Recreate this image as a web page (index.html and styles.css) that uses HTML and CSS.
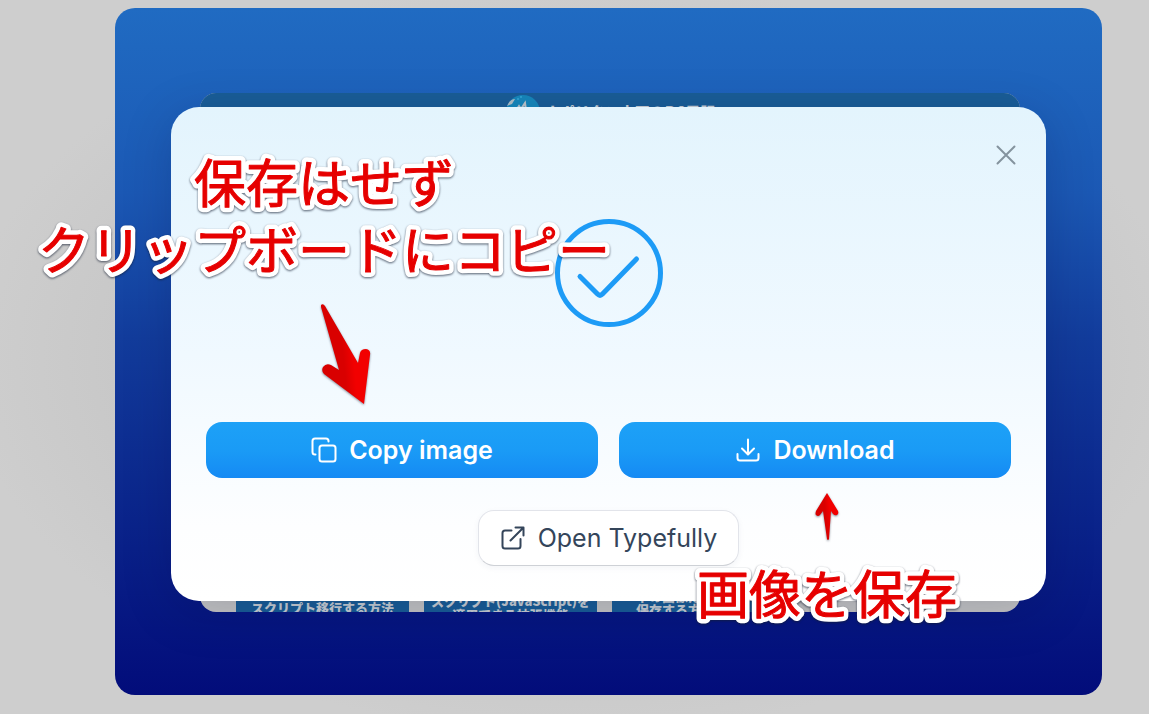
FILE: index.html
```html
<!DOCTYPE html>
<html lang="ja">

<head>
    <meta charset="UTF-8">
    <meta name="viewport" content="width=device-width, initial-scale=1.0">
    <title>Copy image</title>
    <link rel="stylesheet" href="styles.css">
</head>

<body>
    <main class="stage">
        <div class="preview">
            <div class="preview-header">
                <svg class="preview-logo" viewBox="0 0 36 36">
                    <circle cx="18" cy="18" r="17" fill="#1687bb" />
                    <path d="M2 12 Q5 5 10 5 L7 10 Z" fill="#aebdc6" />
                    <path d="M12 15 L14 12 L16 15 L20 9 L21 16" fill="none" stroke="#b9c4cb" stroke-width="2" />
                    <path d="M12 5 h2 M15 3 h2" stroke="#41b8e6" stroke-width="1" />
                </svg>
                <span>ナポリタン寺田のPC日記</span>
            </div>
            <div class="preview-cards">
                <div class="card card-first">スクリプト移行する方法</div>
                <div class="card">スクリプト(JavaScript)を<br>適用できる拡張機能</div>
                <div class="card card-last">下の画像だけを<br>保存する方法</div>
            </div>
        </div>

        <div class="dialog" role="dialog" aria-label="Image ready">
            <button class="close" aria-label="Close">
                <svg viewBox="0 0 20 20" width="20" height="20">
                    <path d="M1.5 1.5 L18.5 18.5 M18.5 1.5 L1.5 18.5" />
                </svg>
            </button>
            <svg class="check" viewBox="1 1 108 108">
                <circle cx="55" cy="55" r="51.5" />
                <path d="M26 58.5 L43.5 76 Q46 78.5 48.5 76 L82.5 41" />
            </svg>
            <div class="actions">
                <button class="btn btn-primary">
                    <svg class="icon" viewBox="0 0 26 26">
                        <rect x="8.5" y="8.5" width="16" height="16" rx="2.5" />
                        <path d="M4.5 17.5 H4 Q1.5 17.5 1.5 15 V4 Q1.5 1.5 4 1.5 H15 Q17.5 1.5 17.5 4 V4.5" />
                    </svg>
                    Copy image
                </button>
                <button class="btn btn-primary">
                    <svg class="icon" viewBox="0 0 26 26">
                        <path d="M13 2.5 V17 M7 11.5 L13 17.5 L19 11.5 M2.5 17 V21 Q2.5 23.5 5 23.5 H21 Q23.5 23.5 23.5 21 V17" />
                    </svg>
                    Download
                </button>
            </div>
            <button class="btn btn-secondary">
                <svg class="icon" viewBox="0 0 26 26">
                    <path d="M11.5 5.5 H5 Q2.5 5.5 2.5 8 V21 Q2.5 23.5 5 23.5 H18 Q20.5 23.5 20.5 21 V14 M15.5 2.5 H23.5 V10.5 M23 3 L10.5 15.5" />
                </svg>
                Open Typefully
            </button>
        </div>

        <svg class="note note-copy" viewBox="0 0 600 150">
            <defs>
                <g id="copy-text">
                    <text x="300" y="60">保存はせず</text>
                    <text x="300" y="127">クリップボードにコピー</text>
                </g>
            </defs>
            <use href="#copy-text" class="note-outline" />
            <use href="#copy-text" class="note-fill" />
        </svg>
        <svg class="note note-save" viewBox="0 0 290 84">
            <defs>
                <text id="save-text" x="145" y="60">画像を保存</text>
            </defs>
            <use href="#save-text" class="note-outline" />
            <use href="#save-text" class="note-fill" />
        </svg>

        <svg class="arrow arrow-copy" viewBox="0 0 56 104">
            <defs>
                <linearGradient id="red" x1="0" y1="0.6" x2="1" y2="0.4">
                    <stop offset="0.45" stop-color="#d90000" />
                    <stop offset="0.65" stop-color="#f20000" />
                </linearGradient>
            </defs>
            <path fill="url(#red)" d="M4 3 Q6 1 8 4 L41 61 L43 51 Q44 47 49 47 Q54 48 53 53 L47 102 L7 72 Q4 69 6 65 Q9 61 14 63 L22 68 L4 5 Z" />
        </svg>
        <svg class="arrow arrow-save" viewBox="0 0 26 50">
            <path fill="url(#red)" d="M13 1 L24 19 Q25 22 23 23 Q21 24 19 22 L17 19 L15 47 Q14 49 13 47 L9 19 L6 23 Q4 25 2 23 Q1 22 2 19 Z" />
        </svg>
    </main>
</body>

</html>
```
FILE: styles.css
```css
* {
    margin: 0;
    padding: 0;
    box-sizing: border-box;
}

body {
    padding: 8px 47px 19px 115px;
    background: radial-gradient(ellipse at center, #c6c6c6 50%, #cecece 75%);
    font-family: Inter, "Noto Sans CJK JP", sans-serif;
}

.stage {
    position: relative;
    display: grid;
    padding: 85px 82px 83px 85px;
    border-radius: 20px;
    background: linear-gradient(#206bc2, #1b58b4 27%, #123c9c 48%, #081d86 82%, #020c7a);
}

.preview,
.dialog {
    grid-area: 1 / 1;
}

/* page behind the dialog */
.preview {
    display: flex;
    flex-direction: column;
    justify-content: space-between;
    overflow: hidden;
    border-radius: 16px;
    background: #c4c4c4;
    font-family: "Noto Sans CJK JP", sans-serif;
    font-weight: 900;
    color: #c8ced4;
}

.preview-header {
    display: flex;
    justify-content: center;
    align-items: center;
    gap: 4px;
    height: 36px;
    background: #195d97;
    font-size: 15px;
}

.preview-logo {
    align-self: flex-start;
    flex-shrink: 0;
    width: 36px;
    height: 36px;
    margin-top: 1px;
}

.preview-cards {
    display: grid;
    grid-template-columns: repeat(3, 173px);
    gap: 15px;
    margin-bottom: -10px;
    padding-left: 36px;
}

.card {
    padding-top: 16px;
    background: #195d97;
    font-size: 13px;
    line-height: 14px;
    text-align: center;
    white-space: nowrap;
}

.card-first {
    padding-top: 23px;
}

.card-last {
    padding: 11px 24px 0;
    text-align: left;
}

.dialog {
    position: relative;
    display: flex;
    flex-direction: column;
    align-items: center;
    margin: 14px -26px 11px -29px;
    padding: 112px 35px 35px;
    border-radius: 28px;
    background: linear-gradient(#e3f4fd, #f0f9ff 50%, #fdfeff 85%, #ffffff);
    box-shadow: 0 10px 50px rgba(0, 10, 50, 0.18);
}

.close {
    position: absolute;
    top: 32px;
    right: 24px;
    display: grid;
    place-items: center;
    width: 32px;
    height: 32px;
    border: none;
    background: none;
    cursor: pointer;
}

.close path {
    fill: none;
    stroke: #84939e;
    stroke-width: 2;
    stroke-linecap: round;
}

.check {
    width: 108px;
    height: 108px;
    margin-bottom: 95px;
    fill: none;
    stroke: #1d9bf6;
    stroke-width: 5;
    stroke-linecap: round;
}

.actions {
    display: grid;
    grid-template-columns: 1fr 1fr;
    gap: 21px;
    width: 100%;
    margin-bottom: 32px;
}

.btn {
    display: flex;
    justify-content: center;
    align-items: center;
    gap: 12px;
    height: 56px;
    border: none;
    border-radius: 16px;
    font-family: inherit;
    font-size: 25px;
    cursor: pointer;
}

.btn-primary {
    background: linear-gradient(#1da1f7, #1a9bf6 50%, #158af4);
    color: #ffffff;
    font-weight: 600;
}

.btn-secondary {
    padding: 0 21px;
    border: 1px solid #e2e4ea;
    border-bottom-color: #ced1d6;
    background: #ffffff;
    box-shadow: 0 2px 6px rgba(30, 50, 90, 0.05);
    color: #34455a;
    font-weight: 400;
}

.icon {
    width: 26px;
    height: 26px;
    fill: none;
    stroke: currentColor;
    stroke-width: 2;
    stroke-linecap: round;
    stroke-linejoin: round;
}

/* red notes drawn over the screen */
.note {
    position: absolute;
    overflow: visible;
    filter: drop-shadow(0 1px 1px rgba(20, 30, 50, 0.7));
    font-family: "Noto Sans CJK JP", sans-serif;
    font-size: 52px;
    font-weight: 400;
    stroke-linejoin: round;
    text-anchor: middle;
}

.note-outline {
    fill: #ffffff;
    stroke: #ffffff;
    stroke-width: 10px;
}

.note-fill {
    fill: #e60000;
    stroke: #e60000;
    stroke-width: 1px;
}

.note-copy {
    top: 135px;
    left: -91px;
    width: 600px;
    height: 150px;
}

.note-save {
    top: 546px;
    left: 567px;
    width: 290px;
    height: 84px;
}

.arrow {
    position: absolute;
    filter: drop-shadow(0 1px 1px rgba(20, 30, 50, 0.5));
}

.arrow-copy {
    top: 294px;
    left: 202px;
    width: 56px;
    height: 104px;
}

.arrow-save {
    top: 484px;
    left: 699px;
    width: 26px;
    height: 50px;
}
```
